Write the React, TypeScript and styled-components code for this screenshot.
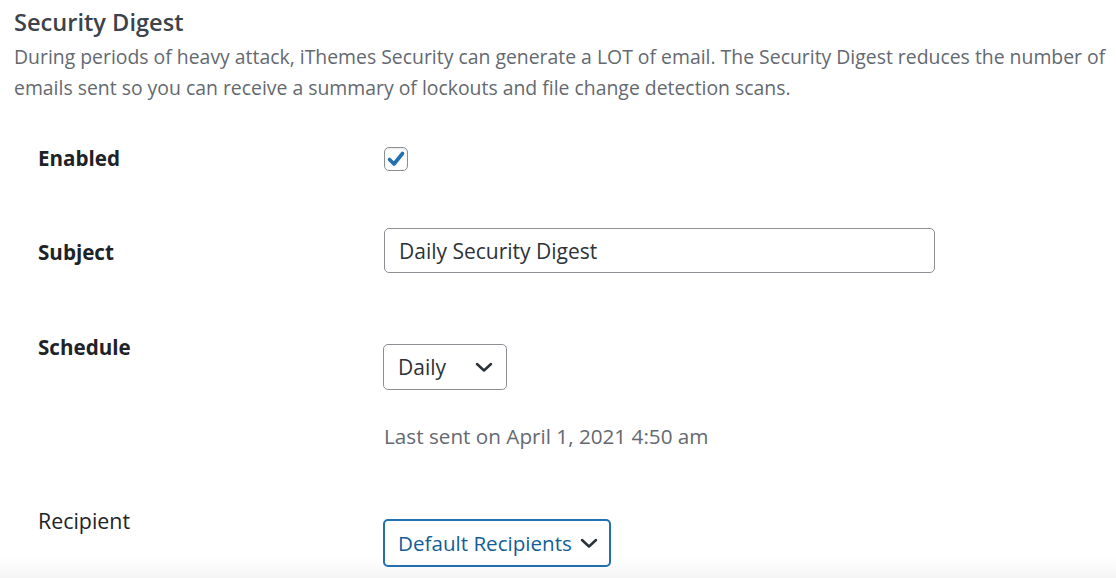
import styled, { createGlobalStyle } from "styled-components"

const GlobalStyle = createGlobalStyle`
  html, body {
    margin: 0;
    padding: 0;
    background: #ffffff;
  }
  body {
    font-family: "Open Sans", "Noto Sans", "Liberation Sans", sans-serif;
    -webkit-font-smoothing: antialiased;
  }
`

const Page = styled.div`
  position: relative;
  height: 578px;
  overflow: hidden;
  padding: 7px 0 0 14px;
  box-sizing: border-box;
`

const Title = styled.h2`
  margin: 0 0 4px;
  font-size: 23.6px;
  line-height: 30px;
  font-weight: 600;
  color: #3c434a;
`

const Description = styled.p`
  margin: 0;
  font-size: 19.4px;
  line-height: 31px;
  color: #646970;
`

const Form = styled.div`
  display: flex;
  flex-direction: column;
  margin-left: 24px;
`

const Row = styled.div<{ $top: number }>`
  display: grid;
  grid-template-columns: 345px 1fr;
  margin-top: ${({ $top }) => $top}px;
`

const Label = styled.div<{ $offset: number; $bold?: boolean }>`
  padding-top: ${({ $offset }) => $offset}px;
  font-size: ${({ $bold }) => ($bold ? 20.6 : 21.4)}px;
  line-height: 28px;
  font-weight: ${({ $bold }) => ($bold ? 700 : 400)};
  color: #1d2327;
`

const Field = styled.div<{ $offset: number; $shift?: number }>`
  padding-top: ${({ $offset }) => $offset}px;
  display: flex;
  flex-direction: column;
  align-items: flex-start;
`

const CheckBox = styled.span`
  margin-left: 1px;
  width: 22px;
  height: 22px;
  border: 1px solid #8c8f94;
  border-radius: 5px;
  display: flex;
  align-items: center;
  justify-content: center;
  box-shadow: inset 0 1px 2px rgba(0, 0, 0, 0.1);
`

const TextInput = styled.div`
  margin-left: 1px;
  width: 551px;
  height: 45px;
  box-sizing: border-box;
  border: 1px solid #8c8f94;
  border-radius: 5px;
  padding: 0 14px;
  display: flex;
  align-items: center;
  font-size: 21px;
  color: #2c3338;
`

const Select = styled.div`
  width: 124px;
  height: 46px;
  box-sizing: border-box;
  border: 1px solid #8c8f94;
  border-radius: 5px;
  padding: 0 10px 0 14px;
  display: flex;
  align-items: center;
  justify-content: space-between;
  font-size: 21px;
  color: #2c3338;
`

const Hint = styled.div`
  margin-top: 32px;
  margin-left: 1px;
  font-size: 20.7px;
  line-height: 28px;
  color: #646970;
`

const DropButton = styled.div`
  height: 48px;
  box-sizing: border-box;
  border: 2px solid #2271b1;
  border-radius: 5px;
  padding: 0 8px 0 13px;
  display: flex;
  align-items: center;
  gap: 5px;
  font-size: 20.6px;
  color: #135e96;
`

const BottomFade = styled.div`
  position: absolute;
  left: 0;
  right: 0;
  bottom: 0;
  height: 22px;
  background: linear-gradient(rgba(0, 0, 0, 0), rgba(0, 0, 0, 0.04));
  pointer-events: none;
`

const Chevron = ({ size = 24 }: { size?: number }) => (
  <svg width={size} height={size} viewBox="0 0 24 24" fill="none">
    <path d="M5 9 L12 15.5 L19 9" stroke="#2c3338" strokeWidth="2.5" strokeLinecap="round" strokeLinejoin="round" />
  </svg>
)

export default function App() {
  return (
    <>
      <GlobalStyle />
      <Page>
        <Title>Security Digest</Title>
        <Description>
          During periods of heavy attack, iThemes Security can generate a LOT of email. The Security Digest reduces the number of emails sent so you can receive a summary of lockouts and file change detection scans.
        </Description>
        <Form>
          <Row $top={41}>
            <Label $offset={0} $bold>Enabled</Label>
            <Field $offset={3}>
              <CheckBox>
                <svg width="20" height="20" viewBox="0 0 20 20">
                  <path d="M3.5 10.5 L8 15 L16.5 4.5" fill="none" stroke="#2271b1" strokeWidth="3.6" strokeLinecap="round" strokeLinejoin="round" />
                </svg>
              </CheckBox>
            </Field>
          </Row>
          <Row $top={56}>
            <Label $offset={10} $bold>Subject</Label>
            <Field $offset={0}>
              <TextInput>Daily Security Digest</TextInput>
            </Field>
          </Row>
          <Row $top={60}>
            <Label $offset={0} $bold>Schedule</Label>
            <Field $offset={11}>
              <Select>
                <span>Daily</span>
                <Chevron />
              </Select>
              <Hint>Last sent on April 1, 2021 4:50 am</Hint>
            </Field>
          </Row>
          <Row $top={57}>
            <Label $offset={0}>Recipient</Label>
            <Field $offset={12}>
              <DropButton>
                <span>Default Recipients</span>
                <Chevron />
              </DropButton>
            </Field>
          </Row>
        </Form>
        <BottomFade />
      </Page>
    </>
  )
}
